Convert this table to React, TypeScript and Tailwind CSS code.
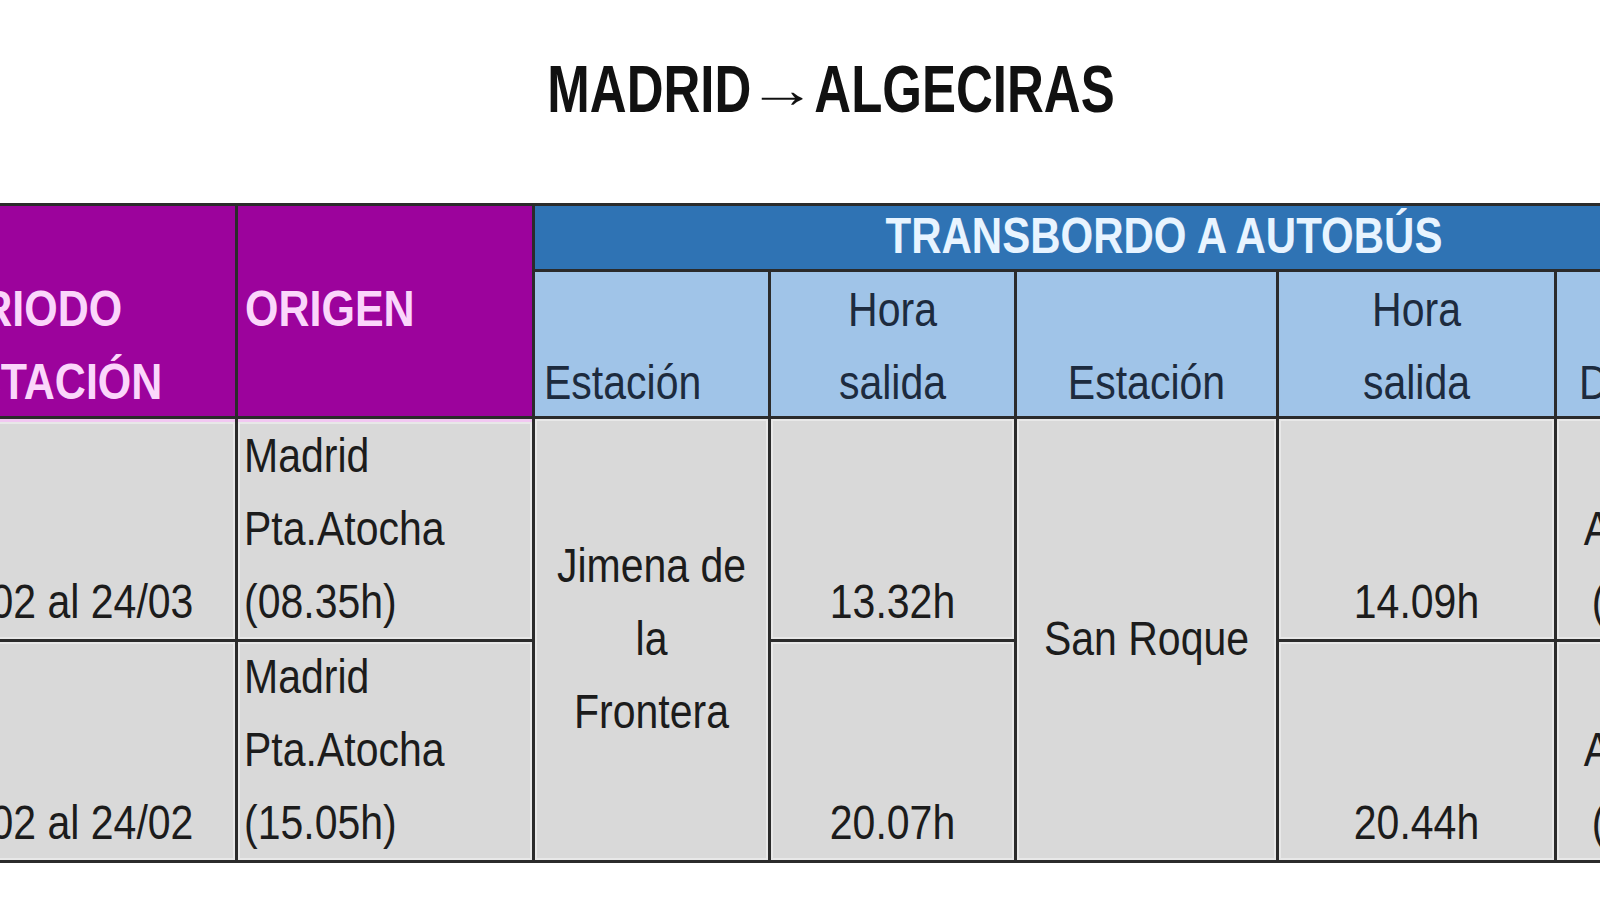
import React from "react";

const FONT = "font-['Liberation_Sans',Arial,sans-serif]";

type CellProps = {
  lines: string[];
  className?: string;
  lineClass?: string;
};

const Lines = ({ lines, className = "", lineClass = "h-[73px] leading-[73px]" }: CellProps) => (
  <div className={className}>
    {lines.map((line, i) => (
      <div key={i} className={`${lineClass} whitespace-nowrap`}>
        <span className="inline-block scale-y-[1.18]">{line || "\u00a0"}</span>
      </div>
    ))}
  </div>
);

const purple = "bg-[#9c039c] text-[#fbd6fb] text-[43px] font-bold";
const sub = "bg-[#a0c4e8] text-[#1d2b3e] text-[41px] flex flex-col pt-[2px]";
const body = "bg-[#d9d9d9] text-[#1c1c1c] text-[41px] flex flex-col shadow-[inset_0_0_0_2px_#e8e8e8]";

const App = () => {
  return (
    <div className={`w-[1600px] h-[900px] overflow-hidden bg-white ${FONT}`}>
      <div className="h-[203px] pt-[60px] pl-[62px] text-center">
        <div className="text-[51px] leading-[60px] font-bold text-[#111]">
          <span className="inline-block scale-y-[1.3]">MADRID</span>
          <span className="inline-block mx-[6px] scale-x-[1.35] font-normal">→</span>
          <span className="inline-block scale-y-[1.3]">ALGECIRAS</span>
        </div>
      </div>

      <div className="-ml-[192px] grid w-max grid-cols-[424px_294px_233px_243px_259px_275px_222px] grid-rows-[63px_144px_220px_218px] gap-[3px] border-[3px] border-[#2b2b2b] bg-[#2b2b2b]">
        {/* cabecera */}
        <Lines
          lines={["PERIODO", "AFECTACIÓN"]}
          className={`${purple} col-start-1 row-start-1 row-span-2 pt-[66px] text-center`}
        />
        <Lines
          lines={["ORIGEN"]}
          className={`${purple} col-start-2 row-start-1 row-span-2 pt-[66px] pl-[7px]`}
        />
        <Lines
          lines={["TRANSBORDO A AUTOBÚS"]}
          lineClass="h-[63px] leading-[59px]"
          className="col-start-3 col-span-5 row-start-1 bg-[#2f73b4] text-[#e8f4ff] text-[42px] font-bold text-center pl-[14px]"
        />
        <Lines lines={["", "Estación"]} className={`${sub} col-start-3 row-start-2 pl-[9px]`} />
        <Lines lines={["Hora", "salida"]} className={`${sub} col-start-4 row-start-2 text-center`} />
        <Lines lines={["", "Estación"]} className={`${sub} col-start-5 row-start-2 text-center`} />
        <Lines lines={["Hora", "salida"]} className={`${sub} col-start-6 row-start-2 text-center`} />
        <Lines lines={["", "Destino"]} className={`${sub} col-start-7 row-start-2 pl-[22px]`} />

        {/* fila 1 */}
        <Lines
          lines={["Del 13/02 al 24/03"]}
          className={`${body} col-start-1 row-start-3 justify-end pl-[8px] text-center border-t-[3px] border-[#f2c8f2]`}
        />
        <Lines
          lines={["Madrid", "Pta.Atocha", "(08.35h)"]}
          className={`${body} col-start-2 row-start-3 justify-end pl-[6px] border-t-[3px] border-[#f2c8f2]`}
        />
        <Lines
          lines={["Jimena de", "la", "Frontera"]}
          className={`${body} col-start-3 row-start-3 row-span-2 justify-center text-center`}
        />
        <Lines lines={["13.32h"]} className={`${body} col-start-4 row-start-3 justify-end text-center`} />
        <Lines
          lines={["San Roque"]}
          className={`${body} col-start-5 row-start-3 row-span-2 justify-center text-center`}
        />
        <Lines lines={["14.09h"]} className={`${body} col-start-6 row-start-3 justify-end text-center`} />
        <Lines
          lines={["Algeciras", "(14.29h)"]}
          className={`${body} col-start-7 row-start-3 justify-end text-center`}
        />

        {/* fila 2 */}
        <Lines
          lines={["Del 13/02 al 24/02"]}
          className={`${body} col-start-1 row-start-4 justify-end pl-[8px] text-center`}
        />
        <Lines
          lines={["Madrid", "Pta.Atocha", "(15.05h)"]}
          className={`${body} col-start-2 row-start-4 justify-end pl-[6px]`}
        />
        <Lines lines={["20.07h"]} className={`${body} col-start-4 row-start-4 justify-end text-center`} />
        <Lines lines={["20.44h"]} className={`${body} col-start-6 row-start-4 justify-end text-center`} />
        <Lines
          lines={["Algeciras", "(21.04h)"]}
          className={`${body} col-start-7 row-start-4 justify-end text-center`}
        />
      </div>
    </div>
  );
};

export default App;
